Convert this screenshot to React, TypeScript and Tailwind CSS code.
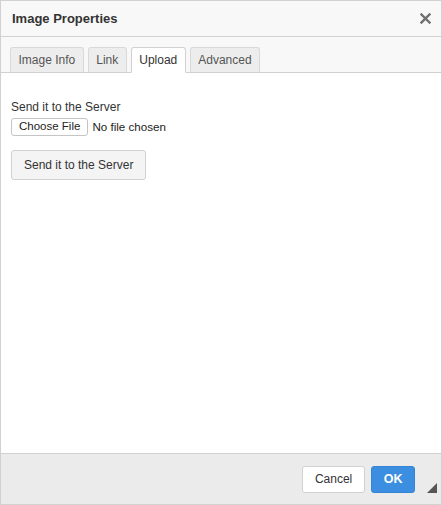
export default function App() {
  const tabs = ["Image Info", "Link", "Upload", "Advanced"];
  const active = "Upload";

  return (
    <div className="w-[442px] h-[505px] flex flex-col border border-[#d1d1d1] bg-white text-[#333] font-['Liberation_Sans',Arial,sans-serif]">
      {/* title bar */}
      <div className="h-[36px] shrink-0 flex items-center justify-between pl-[11px] pr-[10px] bg-[#f8f8f8] border-b border-[#d1d1d1]">
        <span className="text-[13px] font-bold text-[#333]">Image Properties</span>
        <svg width="11" height="11" viewBox="0 0 11 11" className="mt-[-1px]">
          <path d="M1.5 1.5 L9.5 9.5 M9.5 1.5 L1.5 9.5" stroke="#6f6f6f" strokeWidth="2.4" strokeLinecap="square" />
        </svg>
      </div>

      {/* tabs */}
      <div className="shrink-0 flex items-end gap-[4px] px-[9px] pt-[10px] bg-[#f8f8f8] border-b border-[#d1d1d1]">
        {tabs.map((t) => (
          <div
            key={t}
            className={
              t === active
                ? "h-[26px] -mb-px px-[7.5px] flex items-center text-[12px] text-[#333] bg-white border border-b-white border-[#d1d1d1] rounded-t-[3px]"
                : "h-[25px] px-[7.5px] flex items-center text-[12px] text-[#555] bg-[#ededed] border border-b-0 border-[#d9d9d9] rounded-t-[3px]"
            }
          >
            {t}
          </div>
        ))}
      </div>

      {/* body */}
      <div className="flex-1 px-[10px] pt-[26px]">
        <div className="text-[12px] leading-[16px] text-[#333]">Send it to the Server</div>
        <div className="mt-[3px] flex items-center gap-[4px]">
          <button className="h-[18px] px-[7px] text-[11.5px] leading-none text-[#222] bg-white border border-[#c4c4c4] rounded-[3px]">
            Choose File
          </button>
          <span className="text-[11.6px] text-[#222]">No file chosen</span>
        </div>
        <button className="mt-[14px] h-[30px] px-[12px] text-[12px] text-[#333] bg-[#f4f4f4] border border-[#d1d1d1] rounded-[3px]">
          Send it to the Server
        </button>
      </div>

      {/* footer */}
      <div className="relative h-[51px] shrink-0 flex items-center justify-end gap-[6px] pr-[26px] bg-[#ebebeb] border-t border-[#d1d1d1]">
        <button className="h-[27px] px-[12px] text-[12px] text-[#333] bg-white border border-[#d1d1d1] rounded-[3px]">
          Cancel
        </button>
        <button className="h-[27px] px-[11.5px] text-[12.5px] font-bold text-white bg-[#3b8ee0] border border-[#3584d6] rounded-[3px]">
          OK
        </button>
        <svg width="10" height="10" viewBox="0 0 10 10" className="absolute right-[4px] bottom-[11px]">
          <path d="M10 0 L10 10 L0 10 Z" fill="#555" />
        </svg>
      </div>
    </div>
  );
}
